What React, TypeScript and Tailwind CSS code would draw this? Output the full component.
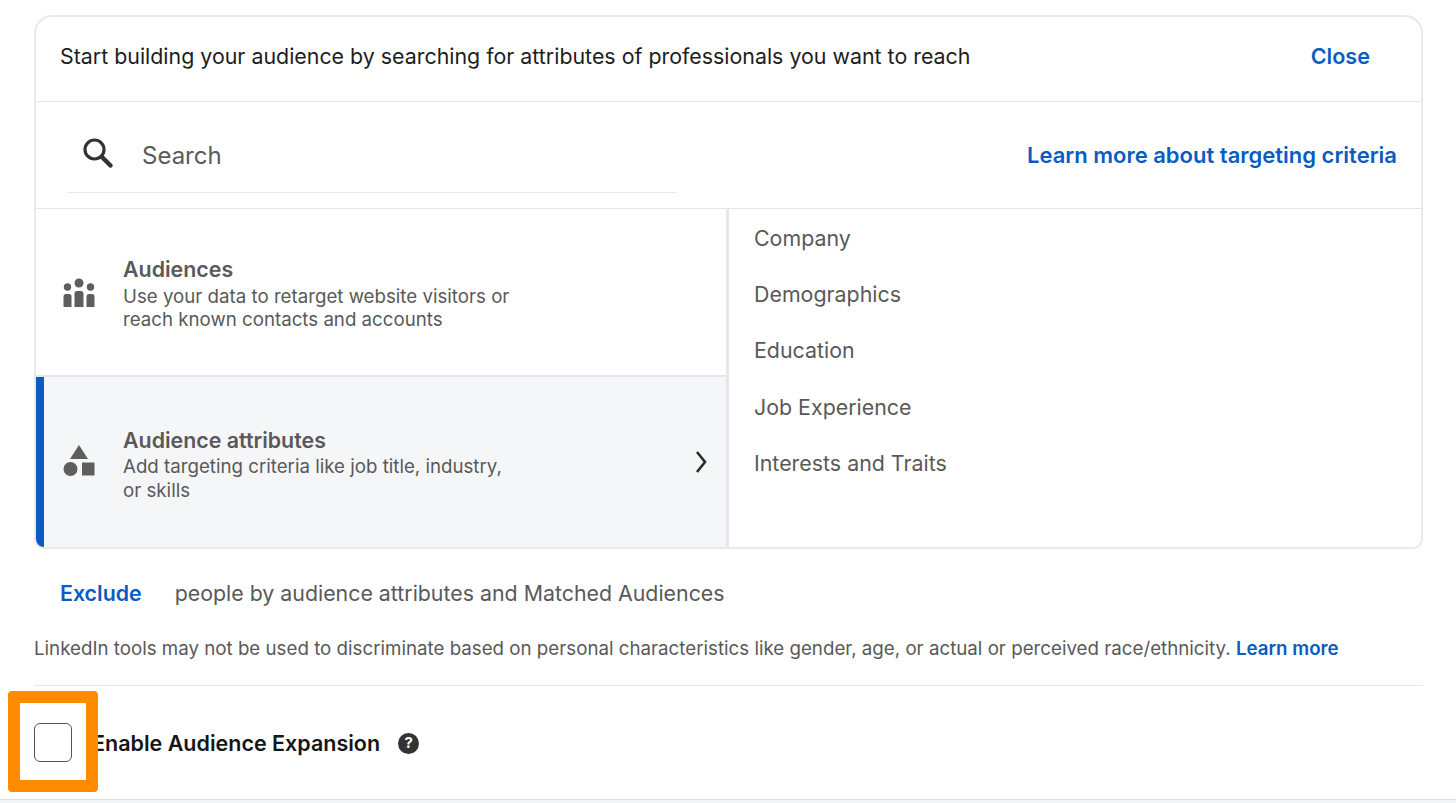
const font = { fontFamily: "Inter, 'Liberation Sans', sans-serif" }

const AudiencesIcon = () => (
    <svg width="34" height="30" viewBox="0 0 34 30" fill="#5e5e5e">
        <circle cx="17" cy="5" r="4.5" />
        <circle cx="5.500" cy="9" r="3.700" />
        <circle cx="28.500" cy="9" r="3.700" />
        <path d="M12.500 15.500a2.500 2.500 0 0 1 2.500-2.500h4a2.500 2.500 0 0 1 2.500 2.500V29h-9z" />
        <path d="M1.500 18.500a2.500 2.500 0 0 1 2.500-2.500h3a2.500 2.500 0 0 1 2.500 2.500V29h-8z" />
        <path d="M24.500 18.500a2.500 2.500 0 0 1 2.500-2.500h3a2.500 2.500 0 0 1 2.500 2.500V29h-8z" />
    </svg>
)

const AttributesIcon = () => (
    <svg width="34" height="34" viewBox="0 0 34 34" fill="#5e5e5e">
        <path d="M17 1l9 14H8z" />
        <circle cx="8.500" cy="25" r="7" />
        <rect x="20" y="18.500" width="12.500" height="13" />
    </svg>
)

const categories = ["Company", "Demographics", "Education", "Job Experience", "Interests and Traits"]

export default function App() {
    return (
        <div className="relative w-[1456px] h-[803px] overflow-hidden bg-white" style={font}>
            <div className="pl-[34px] pt-[15px] w-[1423px]">
                <div className="border-2 border-[#e9e9e9] rounded-t-[18px] rounded-b-[10px]">
                    <div className="flex items-center justify-between h-[85px] pl-[24px] pr-[51px] pb-[6px] border-b border-[#e6e6e6]">
                        <span className="text-[21.38px] text-[#1d1d1d]">Start building your audience by searching for attributes of professionals you want to reach</span>
                        <span className="text-[21.6px] font-semibold text-[#0a5cc2]">Close</span>
                    </div>
                    <div className="flex justify-between h-[107px] pl-[31px] pr-[24px] border-b border-[#e6e6e6]">
                        <div className="flex items-center w-[610px] h-[91px] pt-[18px] border-b border-[#e9e9e9] pl-[15px]">
                            <svg className="mb-[6px]" width="32" height="32" viewBox="0 0 32 32" fill="none" stroke="#333" strokeLinecap="round">
                                <circle cx="12.500" cy="12.500" r="9.500" strokeWidth="3.200" />
                                <path d="M20 20l8.500 8.500" strokeWidth="4.500" />
                            </svg>
                            <span className="ml-[28px] text-[24px] text-[#5a5a5a]">Search</span>
                        </div>
                        <span className="mt-[39px] text-[22px] leading-[28px] font-semibold text-[#0a5cc2]">Learn more about targeting criteria</span>
                    </div>
                    <div className="flex h-[338px]">
                        <div className="w-[690px] flex flex-col">
                            <div className="flex h-[168px] border-b-2 border-[#e4e6e9] pl-[26px] pt-[46px]">
                                <div className="mt-[23px] w-[34px]">
                                    <AudiencesIcon />
                                </div>
                                <div className="ml-[27px]">
                                    <div className="text-[21.38px] leading-[28px] font-semibold text-[#595959]">Audiences</div>
                                    <div className="mt-[2px] text-[18.7px] leading-[23px] text-[#595959]">Use your data to retarget website visitors or<br />reach known contacts and accounts</div>
                                </div>
                            </div>
                            <div className="flex flex-1 items-start bg-[#f5f6f8] border-l-[8px] border-[#0a5cc2] rounded-bl-[8px] pl-[18px] pt-[49px]">
                                <div className="mt-[18px] w-[34px]">
                                    <AttributesIcon />
                                </div>
                                <div className="ml-[27px] flex-1">
                                    <div className="text-[21.38px] leading-[28px] font-semibold text-[#595959]">Audience attributes</div>
                                    <div className="mt-[1px] text-[18.7px] leading-[23.5px] text-[#595959]">Add targeting criteria like job title, industry,<br />or skills</div>
                                </div>
                                <svg className="mt-[24px] mr-[18px]" width="14" height="24" viewBox="0 0 14 24" fill="none" stroke="#2b2b2b" strokeWidth="2.600">
                                    <path d="M3 2l8 10L3 22" />
                                </svg>
                            </div>
                        </div>
                        <div className="flex-1 border-l-[3px] border-[#e4e6e9] pl-[25px] pt-[15px]">
                            {categories.map((c) => (
                                <div className="h-[56.200px] text-[21.38px] leading-[28px] text-[#595959]" key={c}>{c}</div>
                            ))}
                        </div>
                    </div>
                </div>
                <div className="flex items-center mt-[27px] pl-[26px] h-[34px] text-[21.35px]">
                    <span className="font-semibold text-[#0a5cc2]">Exclude</span>
                    <span className="ml-[33px] text-[#595959]">people by audience attributes and Matched Audiences</span>
                </div>
                <div className="mt-[27px] h-[49px] border-b border-[#e6e6e6] text-[18.73px] leading-[24px] text-[#595959] whitespace-nowrap">
                    LinkedIn tools may not be used to discriminate based on personal characteristics like gender, age, or actual or perceived race/ethnicity.{" "}
                    <span className="font-semibold text-[#0a5cc2]">Learn more</span>
                </div>
                <div className="flex items-center h-[114px]">
                    <div className="w-[38px] h-[39px] mb-[1px] rounded-[6px] border border-[#555]" />
                    <span className="ml-[20px] text-[21.5px] font-semibold text-[#161616]">Enable Audience Expansion</span>
                    <span className="ml-[18px] w-[21px] h-[21px] rounded-full bg-[#333] text-white text-[15px] font-bold flex items-center justify-center">?</span>
                </div>
            </div>
            <div className="h-[4px] absolute bottom-0 left-0 right-0 bg-[#f3f4f6] border-t border-[#e2e2e2]" />
            <div className="absolute left-[8px] top-[691px] w-[90px] h-[101px] border-[12px] border-[#ff8c00] rounded-[4px]" />
        </div>
    )
}
